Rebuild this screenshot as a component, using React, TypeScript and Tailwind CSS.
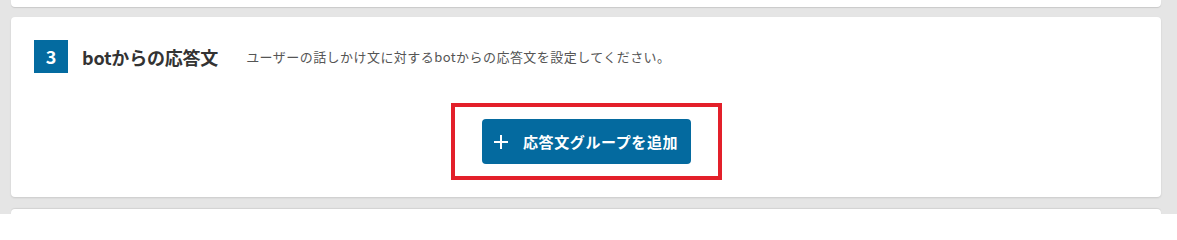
import React from "react"

const jp = { fontFamily: '"Noto Sans CJK JP", "Noto Sans", sans-serif' }

function PlusIcon() {
  return (
    <svg width="16" height="16" viewBox="0 0 16 16" fill="none" stroke="currentColor" strokeWidth="2">
      <path d="M8 1v14M1 8h14" />
    </svg>
  )
}

export default function App() {
  return (
    <div className="min-h-[214px] h-[214px] overflow-hidden bg-[#e5e5e5] pl-[11px] pr-[16px] flex flex-col gap-[10px]" style={jp}>
      {/* previous card (bottom edge only) */}
      <div className="h-[7px] shrink-0 rounded-b-[4px] bg-white shadow-[0_1px_1px_rgba(0,0,0,0.12)]" />

      <section className="shrink-0 h-[180px] rounded-[4px] bg-white shadow-[0_1px_2px_rgba(0,0,0,0.12)] px-[23px] pt-[23px]">
        <div className="flex items-center h-[33px]">
          <div className="w-[34px] h-[33px] bg-[#046ba0] text-white font-bold text-[18px] flex items-center justify-center">
            3
          </div>
          <h2 className="ml-[14px] text-[18px] font-bold text-[#333333] tracking-[-0.2px] leading-none">botからの応答文</h2>
          <p className="ml-[28px] text-[13px] text-[#555555] tracking-[0.45px] leading-none">
            ユーザーの話しかけ文に対するbotからの応答文を設定してください。
          </p>
        </div>

        <div className="flex justify-center mt-[30px]">
          <div className="border-[4px] border-[#e3202a] px-[27px] py-[12px] ml-[1px]">
            <button
              type="button"
              className="w-[209px] h-[45px] rounded-[4px] bg-[#046a9f] text-white flex items-center pl-[11px] gap-[14px]"
            >
              <PlusIcon />
              <span className="text-[15px] font-bold tracking-[0.6px] leading-none">応答文グループを追加</span>
            </button>
          </div>
        </div>
      </section>

      {/* next card (top edge only) */}
      <div className="h-[40px] shrink-0 rounded-t-[4px] bg-white shadow-[0_-1px_1px_rgba(0,0,0,0.08)] mt-[2px]" />
    </div>
  )
}
